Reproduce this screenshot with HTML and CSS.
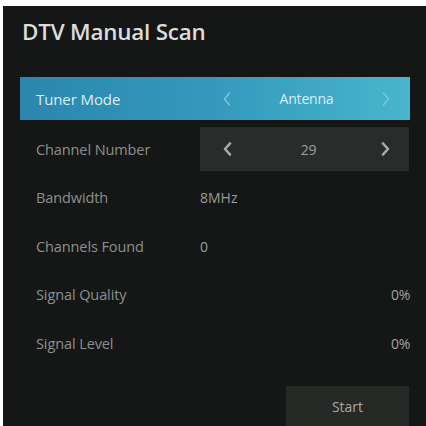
FILE: index.html
```html
<!DOCTYPE html>
<html>
<head>
<meta charset="utf-8">
<link rel="stylesheet" href="styles.css">
</head>
<body>
<div class="screen">
  <h1 class="title">DTV Manual Scan</h1>
  <div class="list">
    <div class="row row-active">
      <span class="label">Tuner Mode</span>
      <div class="selector">
        <svg class="chev" width="8" height="14" viewBox="0 0 8 14"><path d="M6.5 1 L1.5 7 L6.5 13" /></svg>
        <span class="value">Antenna</span>
        <svg class="chev" width="8" height="14" viewBox="0 0 8 14"><path d="M1.5 1 L6.5 7 L1.5 13" /></svg>
      </div>
    </div>
    <div class="row">
      <span class="label">Channel Number</span>
      <div class="selector selector-box">
        <svg class="chev chev-bold" width="9" height="14" viewBox="0 0 9 14"><path d="M7 1.5 L2 7 L7 12.5" /></svg>
        <span class="value">29</span>
        <svg class="chev chev-bold" width="9" height="14" viewBox="0 0 9 14"><path d="M2 1.5 L7 7 L2 12.5" /></svg>
      </div>
    </div>
    <div class="row">
      <span class="label">Bandwidth</span>
      <span class="info">8MHz</span>
    </div>
    <div class="row">
      <span class="label">Channels Found</span>
      <span class="info">0</span>
    </div>
    <div class="row">
      <span class="label">Signal Quality</span>
      <span class="pct">0%</span>
    </div>
    <div class="row">
      <span class="label">Signal Level</span>
      <span class="pct">0%</span>
    </div>
  </div>
  <div class="footer">
    <div class="start">Start</div>
  </div>
</div>
</body>
</html>
```
FILE: styles.css
```css
html, body {
  margin: 0;
  padding: 0;
  background: #ffffff;
}
body {
  width: 426px;
  height: 426px;
  overflow: hidden;
  padding: 6px 0 0 3px;
  box-sizing: border-box;
  font-family: "Open Sans", "Noto Sans", sans-serif;
}
.screen {
  width: 423px;
  height: 420px;
  background: #151716;
  display: flex;
  flex-direction: column;
  box-sizing: border-box;
  padding: 0 16px 0 17px;
}
.title {
  margin: 0;
  padding-top: 11px;
  height: 60px;
  box-sizing: border-box;
  font-size: 22.4px;
  font-weight: 600;
  color: #dcdcdc;
  line-height: 30px;
  letter-spacing: -0.2px;
  padding-left: 2px;
}
.list {
  display: flex;
  flex-direction: column;
  margin-top: 11px;
}
.row {
  height: 48.5px;
  display: flex;
  align-items: center;
  font-size: 14.5px;
  color: #8d8f8e;
}
.row-active {
  height: 43px;
  margin-bottom: 5px;
  background: linear-gradient(90deg, #2b86ad 0%, #3599bd 50%, #48b6cc 100%);
  font-size: 15px;
}
.label {
  width: 180px;
  padding-left: 16px;
  box-sizing: border-box;
  flex: none;
  letter-spacing: -0.1px;
}
.row-active .label {
  color: #d9eef5;
}
.selector {
  flex: 1;
  height: 100%;
  display: flex;
  align-items: center;
  justify-content: space-between;
  padding: 0 20px 0 23px;
  box-sizing: border-box;
}
.selector-box {
  height: 44px;
  background: #2a2c2b;
  margin-right: 1px;
  padding: 0 19px 0 23px;
}
.chev {
  fill: none;
  stroke: #7cc6df;
  stroke-width: 1.4;
  stroke-linecap: round;
  stroke-linejoin: round;
}
.chev-bold {
  stroke: #a9abaa;
  stroke-width: 2.6;
}
.value {
  font-size: 14px;
  color: #d8eef4;
  letter-spacing: -0.2px;
}
.selector-box .value {
  color: #9d9f9e;
  margin-left: 4px;
}
.info {
  color: #9a9c9b;
  font-size: 14px;
}
.pct {
  margin-left: auto;
  font-size: 14px;
  color: #a0a2a1;
  letter-spacing: -0.3px;
}
.footer {
  margin-top: auto;
  display: flex;
  justify-content: flex-end;
}
.start {
  width: 123px;
  height: 40px;
  background: #272927;
  color: #a5a7a6;
  font-size: 14px;
  display: flex;
  align-items: center;
  justify-content: center;
  margin-right: 1px;
}
```
